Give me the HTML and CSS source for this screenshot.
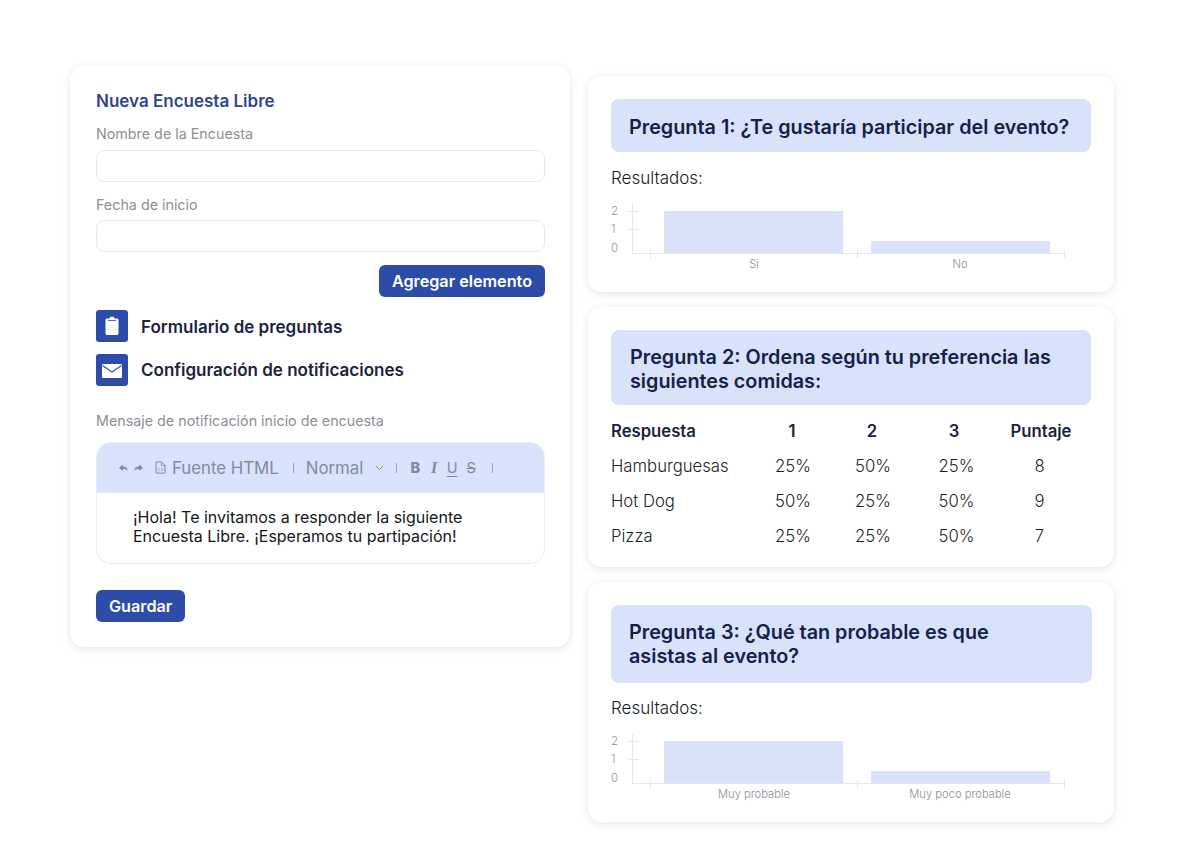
FILE: index.html
```html
<!DOCTYPE html>
<html lang="es">
<head>
<meta charset="utf-8">
<title>Encuesta Libre</title>
<link rel="stylesheet" href="styles.css">
</head>
<body>
<main class="page">
  <section class="card form-card">
    <h1 class="form-title">Nueva Encuesta Libre</h1>
    <label class="field-label first-label">Nombre de la Encuesta</label>
    <div class="input first-input"></div>
    <label class="field-label second-label">Fecha de inicio</label>
    <div class="input second-input"></div>
    <div class="action-row"><button class="btn">Agregar elemento</button></div>
    <div class="option-row first-option">
      <span class="option-icon">
        <svg width="32" height="32" viewBox="0 0 32 32"><path fill="#fff" d="M11 8.500h2.600l.5-1.200c.1-.3.400-.5.700-.5h2.400c.3 0 .6.200.7.500l.5 1.200H21c.9 0 1.500.6 1.500 1.500v13.500c0 .9-.6 1.500-1.500 1.500H11c-.9 0-1.500-.6-1.500-1.500V10c0-.9.600-1.500 1.500-1.500z"/><path fill="#2c4ca8" d="M12 10h8v.8h-8z"/></svg>
      </span>
      <span class="option-text">Formulario de preguntas</span>
    </div>
    <div class="option-row second-option">
      <span class="option-icon">
        <svg width="32" height="32" viewBox="0 0 32 32"><rect x="6" y="10" width="20" height="14" rx="1" fill="#fff"/><path d="M6.500 11.500 16 18l9.500-6.500" fill="none" stroke="#2c4ca8" stroke-width="1.100"/></svg>
      </span>
      <span class="option-text">Configuración de notificaciones</span>
    </div>
    <label class="field-label message-label">Mensaje de notificación inicio de encuesta</label>
    <div class="editor">
      <div class="toolbar">
        <svg class="tool-arrow" width="9" height="8" viewBox="0 0 9 8"><path fill="#7f8aa3" d="M0 3.800 4 .5v2.100c2.800 0 4.500 1.500 4.800 4.400C7.800 5.500 6.300 5 4 5v2z"/></svg>
        <svg class="tool-arrow redo" width="9" height="8" viewBox="0 0 9 8"><path fill="#7f8aa3" d="M9 3.800 5 .5v2.100C2.200 2.600.5 4.100.2 7 1.200 5.500 2.700 5 5 5v2z"/></svg>
        <svg class="tool-file" width="11" height="13" viewBox="0 0 11 13"><path fill="none" stroke="#7f8aa3" d="M1 .9h5.500L10 4.400v7.700H1z"/><path fill="none" stroke="#7f8aa3" stroke-width=".8" d="M6.300 1v3.500H10M4.500 7 3 8.500 4.500 10M6.500 7 8 8.500 6.500 10"/></svg>
        <span class="tool-text source">Fuente HTML</span>
        <span class="divider d1"></span>
        <span class="tool-text normal">Normal</span>
        <svg class="chevron" width="9" height="6" viewBox="0 0 9 6"><path fill="none" stroke="#7f8aa3" d="m1 1 3.500 3.500L8 1"/></svg>
        <span class="divider d2"></span>
        <span class="fmt bold">B</span>
        <span class="fmt italic">I</span>
        <span class="fmt under">U</span>
        <span class="fmt strike">S</span>
        <span class="divider d3"></span>
      </div>
      <div class="editor-body">¡Hola! Te invitamos a responder la siguiente<br>Encuesta Libre. ¡Esperamos tu partipación!</div>
    </div>
    <button class="btn save">Guardar</button>
  </section>

  <div class="results">
    <section class="card result-card">
      <h2 class="question q1">Pregunta 1: ¿Te gustaría participar del evento?</h2>
      <p class="results-label rl1">Resultados:</p>
      <svg class="chart" width="470" height="75" viewBox="0 0 470 75">
        <rect class="bar" x="53" y="11" width="179" height="43"/>
        <rect class="bar" x="260" y="41" width="179" height="13"/>
        <path class="axis" d="M21.500 4v50M16 11.500h12M16 29.500h12M21 53.500h432M39.500 50v8M246.500 50v8M453.500 50v8"/>
        <text class="tick" x="0" y="15">2</text>
        <text class="tick" x="0" y="33">1</text>
        <text class="tick" x="0" y="52">0</text>
        <text class="cat" x="143" y="68">Si</text>
        <text class="cat" x="349" y="68">No</text>
      </svg>
    </section>

    <section class="card table-card">
      <h2 class="question q2">Pregunta 2: Ordena según tu preferencia las siguientes comidas:</h2>
      <table class="score">
        <thead>
          <tr><th class="name">Respuesta</th><th>1</th><th>2</th><th>3</th><th>Puntaje</th></tr>
        </thead>
        <tbody>
          <tr><td class="name">Hamburguesas</td><td>25%</td><td>50%</td><td>25%</td><td>8</td></tr>
          <tr><td class="name">Hot Dog</td><td>50%</td><td>25%</td><td>50%</td><td>9</td></tr>
          <tr><td class="name">Pizza</td><td>25%</td><td>25%</td><td>50%</td><td>7</td></tr>
        </tbody>
      </table>
    </section>

    <section class="card result-card">
      <h2 class="question q3">Pregunta 3: ¿Qué tan probable es que<br>asistas al evento?</h2>
      <p class="results-label rl3">Resultados:</p>
      <svg class="chart" width="470" height="75" viewBox="0 0 470 75">
        <rect class="bar" x="53" y="11" width="179" height="43"/>
        <rect class="bar" x="260" y="41" width="179" height="13"/>
        <path class="axis" d="M21.500 4v50M16 11.500h12M16 29.500h12M21 53.500h432M39.500 50v8M246.500 50v8M453.500 50v8"/>
        <text class="tick" x="0" y="15">2</text>
        <text class="tick" x="0" y="33">1</text>
        <text class="tick" x="0" y="52">0</text>
        <text class="cat" x="143" y="68">Muy probable</text>
        <text class="cat" x="349" y="68">Muy poco probable</text>
      </svg>
    </section>
  </div>
</main>
</body>
</html>
```
FILE: styles.css
```css
* { box-sizing: border-box; }
html, body { margin: 0; background: #fff; }
body { font-family: Inter, "Liberation Sans", sans-serif; color: #1c2340; }
.page { display: flex; align-items: flex-start; gap: 18px; padding: 66px 0 30px 70px; }
.card { background: #fff; border-radius: 14px; box-shadow: 0 2px 8px rgba(50, 80, 140, .15); }
.form-card { width: 500px; height: 581px; padding: 26px 25px 25px 26px; }
.form-title { margin: 0; font-size: 17px; line-height: 19px; font-weight: 600; color: #2f4591; }
.field-label { display: block; font-size: 14.300px; line-height: 18px; font-weight: 400; color: #8c8f96; }
.first-label { margin-top: 14px; }
.second-label { margin-top: 14px; }
.message-label { margin-top: 26px; }
.input { height: 32px; border: 1px solid #e6e9ef; border-radius: 8px; background: #fff; }
.first-input { margin-top: 7px; }
.second-input { margin-top: 6px; }
.action-row { display: flex; justify-content: flex-end; margin-top: 13px; }
.btn { height: 32px; padding: 0 13px; border: 0; border-radius: 6px; background: #2c4ca8; color: #fff; font: 600 16.200px/32px Inter, "Liberation Sans", sans-serif; }
.save { display: block; margin-top: 26px; }
.option-row { display: flex; align-items: center; gap: 13px; }
.first-option { margin-top: 13px; }
.second-option { margin-top: 12px; }
.first-option .option-text { padding-top: 2px; }
.option-icon { display: block; width: 32px; height: 32px; background: #2c4ca8; border-radius: 3px; }
.option-icon svg { display: block; }
.option-text { font-size: 17px; line-height: 24px; font-weight: 600; color: #1c2340; }
.editor { margin-top: 12px; height: 122px; border: 1px solid #e9ecf2; border-radius: 15px; overflow: hidden; }
.toolbar { display: flex; align-items: center; height: 50px; padding-left: 22px; background: #d8e2fa; border-bottom: 1px solid #e4eafa; }
.tool-arrow { display: block; }
.redo { margin-left: 6px; }
.tool-file { margin-left: 12px; }
.tool-text { font-size: 16.800px; color: #7f8aa3; }
.source { margin-left: 6px; }
.divider { width: 1px; height: 10px; background: #98a2b8; }
.d1 { margin-left: 14px; }
.normal { margin-left: 12px; }
.chevron { margin-left: 12px; }
.d2 { margin-left: 12px; }
.fmt { display: block; width: 12px; font-size: 14.500px; text-align: center; color: #7f8aa3; }
.bold { margin-left: 12px; font-weight: 800; }
.italic { margin-left: 7px; font-family: "Liberation Serif", serif; font-size: 16px; font-weight: 700; font-style: italic; }
.under { margin-left: 6px; text-decoration: underline; text-underline-offset: 3px; }
.strike { margin-left: 7px; text-decoration: line-through; }
.d3 { margin-left: 15px; }
.editor-body { padding: 15px 0 0 36px; font-size: 16px; line-height: 19px; color: #15171c; }
.results { display: flex; flex-direction: column; gap: 15px; width: 526px; margin-top: 10px; }
.result-card, .table-card { padding: 23px 23px 0; }
.result-card { padding-bottom: 17px; }
.table-card { height: 260px; }
.question { margin: 0; border-radius: 8px; background: #d8e2fa; font-size: 19.800px; line-height: 24px; font-weight: 600; color: #16214a; }
.q1 { height: 53px; padding: 16px 0 0 18px; }
.q2 { height: 75px; padding: 15px 30px 0 19px; }
.q3 { height: 78px; padding: 15px 30px 0 18px; margin-right: -1px; }
.results-label { margin: 0; font-size: 17px; line-height: 20px; font-weight: 300; color: #16181e; }
.rl1 { margin-top: 16px; }
.rl3 { margin-top: 15px; }
.chart { display: block; margin-top: 12px; }
.bar { fill: #d9e2f9; }
.axis { fill: none; stroke: #e4e7ec; stroke-width: 1; }
.tick { font-size: 11.500px; font-weight: 300; fill: #8f9298; }
.cat { font-size: 11.200px; font-weight: 300; fill: #8a8d94; text-anchor: middle; }
.score { width: 472px; margin-top: 8px; border-collapse: collapse; table-layout: fixed; font-size: 16.700px; }
.score th, .score td { height: 35px; padding: 0; text-align: center; }
.score th { font-weight: 600; color: #1c2340; }
.score td { font-weight: 300; color: #1c1f28; }
.score .name { width: 141px; text-align: left; }
.score th:nth-child(2), .score th:nth-child(3) { width: 80px; }
.score th:nth-child(4) { width: 84px; }
.score td:nth-child(2), .score td:nth-child(3) { padding-left: 2px; }
.score td:nth-child(4) { padding-left: 5px; }
.score th:nth-child(5) { padding-left: 3px; }
```
